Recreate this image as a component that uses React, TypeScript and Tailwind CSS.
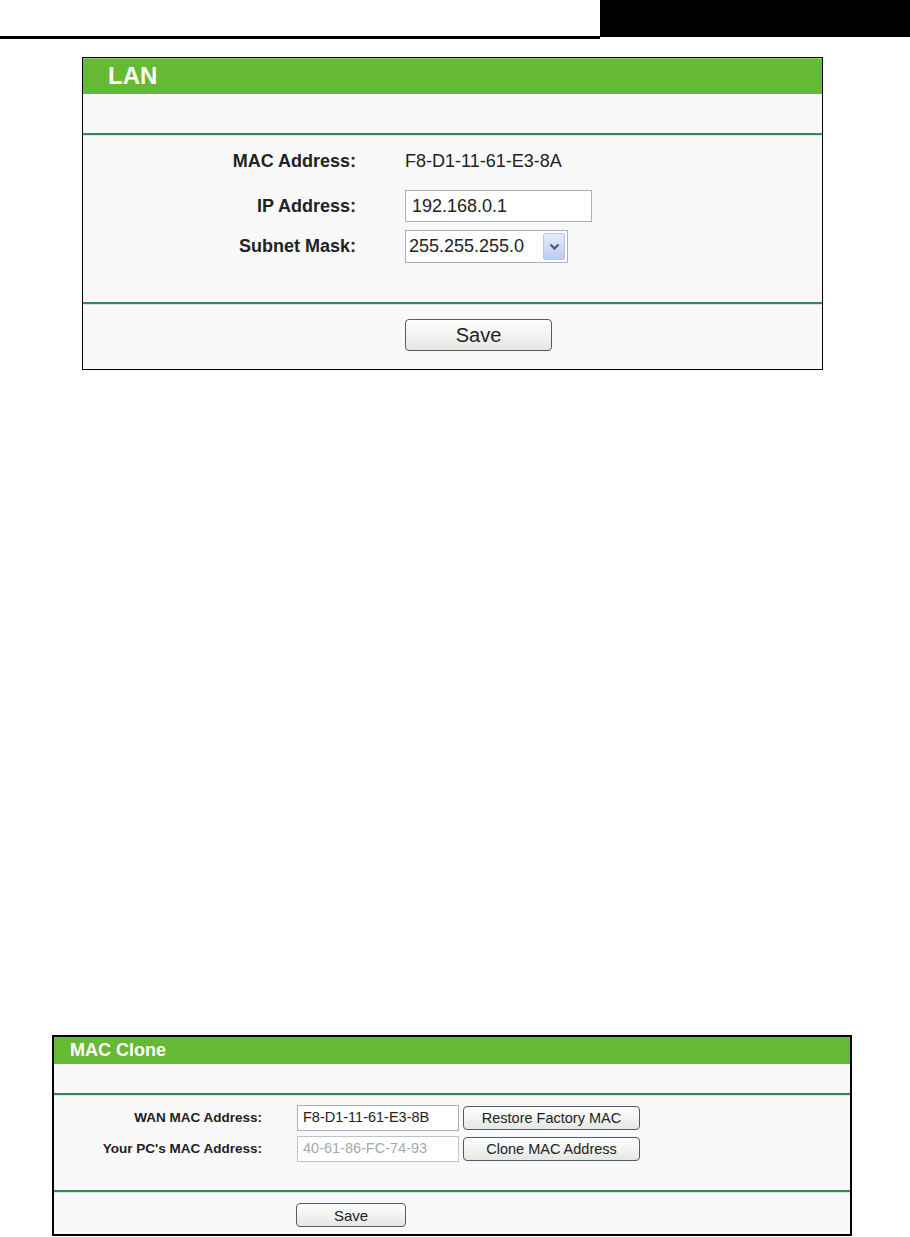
import React from "react";

const font = "font-['Liberation_Sans',Arial,sans-serif]";

function Divider() {
    return <div className="h-[3px] border-t-2 border-[#3b8756] bg-[#d7ead9]" />;
}

function OldButton({ label, className }: { label: string; className: string }) {
    return (
        <button
            className={`rounded-[4px] border border-[#4a5d72] bg-gradient-to-b from-white to-[#e6e6e2] text-[#222] ${className}`}
        >
            {label}
        </button>
    );
}

function LanPanel() {
    return (
        <div className="ml-[82px] mt-[18px] w-[741px] border border-black bg-[#f9f9f9]">
            <div className="h-[36px] bg-[#66b933] pl-[25px] border-t border-[#8fd06a]">
                <span className="text-[24px] font-bold leading-[34px] text-white">LAN</span>
            </div>
            <div className="h-[39px]" />
            <Divider />
            <div className="flex flex-col pt-[9px] pb-[39px]">
                <div className="flex h-[32px] items-center">
                    <span className="w-[273px] text-right text-[18px] font-bold text-[#222]">MAC Address:</span>
                    <span className="ml-[49px] text-[18px] text-[#222]">F8-D1-11-61-E3-8A</span>
                </div>
                <div className="mt-[13px] flex h-[32px] items-center">
                    <span className="w-[273px] text-right text-[18px] font-bold text-[#222]">IP Address:</span>
                    <div className="ml-[49px] flex h-[32px] w-[187px] items-center border border-[#a3b3c6] bg-white pl-[6px] text-[18px] text-[#222]">
                        192.168.0.1
                    </div>
                </div>
                <div className="mt-[8px] flex h-[33px] items-center">
                    <span className="w-[273px] text-right text-[18px] font-bold text-[#222]">Subnet Mask:</span>
                    <div className="ml-[49px] flex h-[33px] w-[163px] items-center border border-[#a3b3c6] bg-white pl-[3px] pr-[2px] text-[18px] text-[#222]">
                        <span className="flex-1">255.255.255.0</span>
                        <div className="flex h-[27px] w-[22px] items-center justify-center rounded-[2px] border border-[#b4c6e6] bg-gradient-to-b from-[#e4ecfb] to-[#bccdf0]">
                            <svg width="11" height="8" viewBox="0 0 11 8">
                                <path d="M1.5 1.5 L5.5 5.5 L9.5 1.5" fill="none" stroke="#4b5f84" strokeWidth="2.4" />
                            </svg>
                        </div>
                    </div>
                </div>
            </div>
            <Divider />
            <div className="flex h-[64px] items-start pt-[14px]">
                <OldButton label="Save" className="ml-[322px] h-[32px] w-[147px] text-[20px] leading-none" />
            </div>
        </div>
    );
}

function MacClonePanel() {
    return (
        <div className="ml-[52px] mt-[665px] w-[800px] border-2 border-black bg-[#f9f9f9]">
            <div className="h-[27px] bg-[#66b933] pl-[16px]">
                <span className="text-[18px] font-bold leading-[27px] text-white">MAC Clone</span>
            </div>
            <div className="h-[29px]" />
            <Divider />
            <div className="flex flex-col pt-[9px] pb-[28px]">
                <div className="flex h-[26px] items-center">
                    <span className="w-[208px] text-right text-[13.5px] font-bold text-[#222]">WAN MAC Address:</span>
                    <div className="ml-[35px] flex h-[26px] w-[162px] items-center border border-[#a3b3c6] bg-white pl-[5px] text-[14.5px] text-[#222]">
                        F8-D1-11-61-E3-8B
                    </div>
                    <OldButton label="Restore Factory MAC" className="ml-[4px] h-[24px] w-[177px] text-[14.5px] leading-none" />
                </div>
                <div className="mt-[5px] flex h-[26px] items-center">
                    <span className="w-[208px] text-right text-[13.5px] font-bold text-[#222]">Your PC's MAC Address:</span>
                    <div className="ml-[35px] flex h-[26px] w-[162px] items-center border border-[#b9c4d1] bg-white pl-[5px] text-[14.5px] text-[#a8a8a8]">
                        40-61-86-FC-74-93
                    </div>
                    <OldButton label="Clone MAC Address" className="ml-[4px] h-[24px] w-[177px] text-[14.5px] leading-none" />
                </div>
            </div>
            <Divider />
            <div className="flex h-[41px] items-start pt-[10px]">
                <OldButton label="Save" className="ml-[242px] h-[24px] w-[110px] text-[15px] leading-none" />
            </div>
        </div>
    );
}

export default function App() {
    return (
        <div className={`min-h-[1237px] w-[910px] bg-white ${font}`}>
            <div className="flex">
                <div className="h-[39px] w-[600px] border-b-[3px] border-black" />
                <div className="h-[37px] flex-1 bg-black" />
            </div>
            <LanPanel />
            <MacClonePanel />
        </div>
    );
}
